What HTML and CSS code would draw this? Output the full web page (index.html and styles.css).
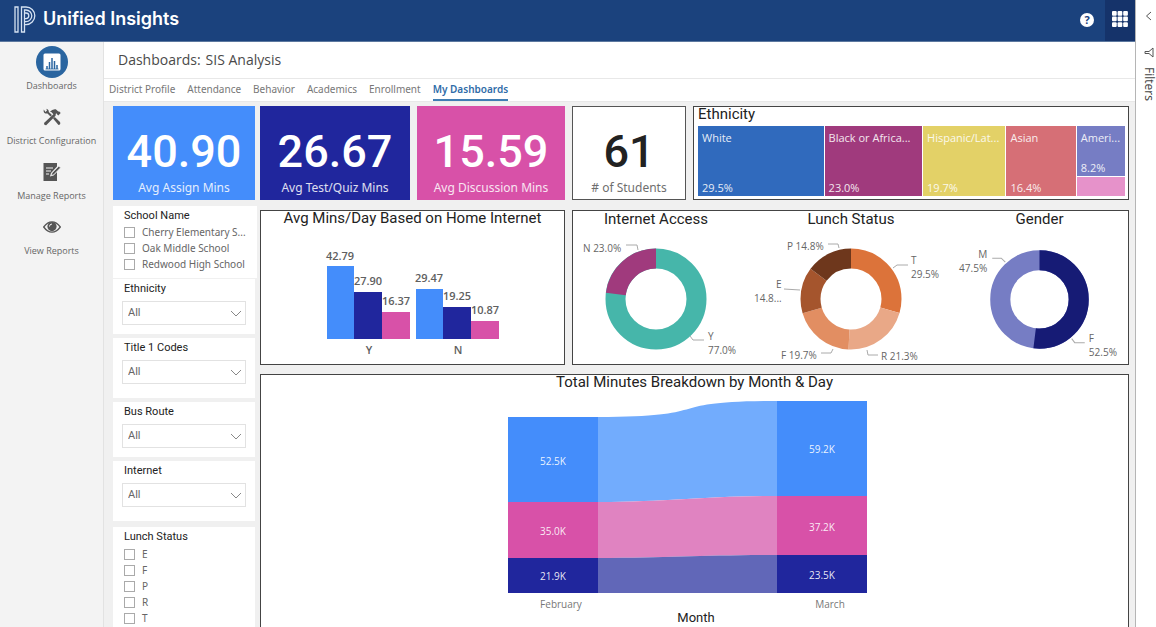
FILE: index.html
```html
<!DOCTYPE html>
<html lang="en">
<head>
<meta charset="utf-8">
<title>Unified Insights</title>
<link rel="stylesheet" href="styles.css">
</head>
<body>
<div class="app">
  <header class="topbar">
    <a class="brand" href="#">
      <svg class="brand-logo" width="22" height="27" viewBox="0 0 22 27" fill="none" stroke="#d5e2f2" stroke-width="1.300">
        <path d="M1 1V26H4V1ZM7.500 26V1H12A8.800 8.800 0 0 1 12 18.600H10.500V26Z"/>
        <path d="M10.500 18V4H12A5.800 5.800 0 0 1 12 15.600H10.500M10.500 7H12A2.800 2.800 0 0 1 12 12.600H10.500"/>
      </svg>
      <span>Unified Insights</span>
    </a>
    <button class="help" aria-label="Help">?</button>
    <button class="apps" aria-label="Apps">
      <svg width="16" height="16" viewBox="0 0 16 16" fill="#fff"><rect width="4.700" height="4.700" rx="1"/><rect x="5.600" width="4.700" height="4.700" rx="1"/><rect x="11.200" width="4.700" height="4.700" rx="1"/><rect y="5.600" width="4.700" height="4.700" rx="1"/><rect x="5.600" y="5.600" width="4.700" height="4.700" rx="1"/><rect x="11.200" y="5.600" width="4.700" height="4.700" rx="1"/><rect y="11.200" width="4.700" height="4.700" rx="1"/><rect x="5.600" y="11.200" width="4.700" height="4.700" rx="1"/><rect x="11.200" y="11.200" width="4.700" height="4.700" rx="1"/></svg>
    </button>
  </header>
  <div class="shell">
    <nav class="sidebar">
      <a class="side-item" href="#">
        <span class="side-icon active"><svg width="18" height="18" viewBox="0 0 18 18"><rect x="0.500" y="0.500" width="17" height="17" rx="1.500" fill="#fff"/><path d="M4 16V13M6.500 16V9M9 16V5M11.500 16V8M14 16V12" stroke="#2a65a0" stroke-width="1.500"/><path d="M2.500 16H15.500" stroke="#2a65a0" stroke-width=".8"/></svg></span>
        <span>Dashboards</span>
      </a>
      <a class="side-item" href="#">
        <span class="side-icon"><svg width="18" height="18" viewBox="0 0 18 18" fill="#555"><path d="M.8 1.500Q0 4.500 2.500 5.500L4.500 5.500 7.500 8.500 9 7 5.800 4Q6 1.500 3.300.8L4 2.500 2.500 4Z"/><path d="M10 10.500L11.800 9 17 14Q18 16.500 15.500 17Z"/><path d="M1 15L10.400 6.200 8.600 4.300 7 3.800Q9.300 .8 12.800 1.300L15.300 3.600 16.300 3.500 17.700 5 15.300 7.500 14 6.300V5.500L12.800 5.800 12.600 7.800 3.200 17.300Q.8 17.500 1 15Z"/></svg></span>
        <span>District Configuration</span>
      </a>
      <a class="side-item" href="#">
        <span class="side-icon"><svg width="18" height="18" viewBox="0 0 18 18"><path d="M.5 0H14V3.500L8 10 7 13.500 10.500 12.500 14 9V18H.5Z" fill="#555"/><path d="M3 5H10M3 8H8M3 11H6" stroke="#f3f3f3" stroke-width="1.200"/><path d="M8.300 12.500L9 10 15.800 3.200 17.500 4.800 10.700 11.700Z" fill="#555" stroke="#f3f3f3" stroke-width=".6"/></svg></span>
        <span>Manage Reports</span>
      </a>
      <a class="side-item" href="#">
        <span class="side-icon"><svg width="18" height="12" viewBox="0 0 18 12"><path d="M.7 6Q4.500 .8 9 .8T17.300 6Q13.500 11.200 9 11.200T.7 6Z" fill="none" stroke="#555" stroke-width="1.300"/><circle cx="9" cy="5.600" r="4.600" fill="#555"/><path d="M6.500 5.500A2.500 2.500 0 0 1 9 3" fill="none" stroke="#f3f3f3"/></svg></span>
        <span>View Reports</span>
      </a>
    </nav>
    <main class="main">
      <h1 class="page-title"><span>Dashboards:</span><span>SIS Analysis</span></h1>
      <nav class="tabs">
        <a href="#">District Profile</a><a href="#">Attendance</a><a href="#">Behavior</a><a href="#">Academics</a><a href="#">Enrollment</a><a class="current" href="#">My Dashboards</a>
      </nav>
      <div class="canvas">
        <div class="left">
          <section class="kpi blue"><strong>40.90</strong><span>Avg Assign Mins</span></section>
          <fieldset class="slicer list first">
            <legend>School Name</legend>
            <label><input type="checkbox"><span>Cherry Elementary S...</span></label>
            <label><input type="checkbox"><span>Oak Middle School</span></label>
            <label><input type="checkbox"><span>Redwood High School</span></label>
          </fieldset>
          <div class="slicer short">
            <label for="s-eth">Ethnicity</label>
            <div class="drop"><select id="s-eth"><option>All</option></select><svg width="12" height="7" viewBox="0 0 12 7"><path d="M1 1L6 6 11 1"/></svg></div>
          </div>
          <div class="slicer tall">
            <label for="s-title">Title 1 Codes</label>
            <div class="drop"><select id="s-title"><option>All</option></select><svg width="12" height="7" viewBox="0 0 12 7"><path d="M1 1L6 6 11 1"/></svg></div>
          </div>
          <div class="slicer short">
            <label for="s-bus">Bus Route</label>
            <div class="drop"><select id="s-bus"><option>All</option></select><svg width="12" height="7" viewBox="0 0 12 7"><path d="M1 1L6 6 11 1"/></svg></div>
          </div>
          <div class="slicer tall">
            <label for="s-net">Internet</label>
            <div class="drop"><select id="s-net"><option>All</option></select><svg width="12" height="7" viewBox="0 0 12 7"><path d="M1 1L6 6 11 1"/></svg></div>
          </div>
          <fieldset class="slicer list last">
            <legend>Lunch Status</legend>
            <label><input type="checkbox"><span>E</span></label>
            <label><input type="checkbox"><span>F</span></label>
            <label><input type="checkbox"><span>P</span></label>
            <label><input type="checkbox"><span>R</span></label>
            <label><input type="checkbox"><span>T</span></label>
          </fieldset>
        </div>
        <div class="right">
          <div class="row-kpi">
            <section class="kpi navy"><strong>26.67</strong><span>Avg Test/Quiz Mins</span></section>
            <section class="kpi pink"><strong>15.59</strong><span>Avg Discussion Mins</span></section>
            <section class="kpi plain"><strong>61</strong><span># of Students</span></section>
            <section class="panel ethnicity">
              <h2>Ethnicity</h2>
              <div class="treemap">
                <div class="tile t-white"><span>White</span><span>29.5%</span></div>
                <div class="tile t-black"><span>Black or Africa...</span><span>23.0%</span></div>
                <div class="tile t-hisp"><span>Hispanic/Lat...</span><span>19.7%</span></div>
                <div class="tile t-asian"><span>Asian</span><span>16.4%</span></div>
                <div class="tile-stack">
                  <div class="tile t-amer"><span>Ameri...</span><span>8.2%</span></div>
                  <div class="tile t-other"></div>
                </div>
              </div>
            </section>
          </div>
          <div class="row-charts">
            <section class="panel bars">
              <h2>Avg Mins/Day Based on Home Internet</h2>
              <svg class="chart" viewBox="0 0 303 136">
                <g fill="#448dfb"><rect x="66" y="40" width="27" height="73"/><rect x="155" y="63" width="27" height="50"/></g>
                <g fill="#20269d"><rect x="93" y="66" width="28" height="47"/><rect x="182" y="81" width="28" height="32"/></g>
                <g fill="#d851a8"><rect x="121" y="86" width="28" height="27"/><rect x="210" y="95" width="28" height="18"/></g>
                <g class="bar-label"><text x="79" y="34">42.79</text><text x="107" y="59">27.90</text><text x="135" y="79">16.37</text><text x="168" y="56">29.47</text><text x="196" y="74">19.25</text><text x="224" y="88">10.87</text><text x="108" y="128">Y</text><text x="197" y="128">N</text></g>
              </svg>
            </section>
            <section class="panel donuts">
              <figure class="f-net">
                <h2>Internet Access</h2>
                <svg class="chart" viewBox="0 0 166 136">
                  <g class="ring" transform="rotate(-90 83 72)"><circle cx="83" cy="72" r="40.500" pathLength="100" stroke="#46b6aa"/><circle cx="83" cy="72" r="40.500" pathLength="100" stroke="#a03a7d" stroke-dasharray="23 77" stroke-dashoffset="-77"/></g>
                  <path class="lead" d="M53 18H64L65 23M117 109L120 113H131"/>
                  <g class="lab"><text x="10" y="25">N 23.0%</text><text x="135" y="113">Y</text><text x="135" y="127">77.0%</text></g>
                </svg>
              </figure>
              <figure>
                <h2>Lunch Status</h2>
                <svg class="chart" viewBox="0 0 200 136">
                  <g class="ring" transform="rotate(-90 100 72)"><circle cx="100" cy="72" r="40.500" pathLength="100" stroke="#dc733a" stroke-dasharray="29.500 70.500"/><circle cx="100" cy="72" r="40.500" pathLength="100" stroke="#e9a887" stroke-dasharray="21.300 78.700" stroke-dashoffset="-29.500"/><circle cx="100" cy="72" r="40.500" pathLength="100" stroke="#e28e62" stroke-dasharray="19.600 80.400" stroke-dashoffset="-50.800"/><circle cx="100" cy="72" r="40.500" pathLength="100" stroke="#a5552d" stroke-dasharray="14.800 85.200" stroke-dashoffset="-70.400"/><circle cx="100" cy="72" r="40.500" pathLength="100" stroke="#6e371c" stroke-dasharray="14.800 85.200" stroke-dashoffset="-85.200"/></g>
                  <path class="lead" d="M77 17H87L88 21M33 62L49 63M70 126H80L82 122M116 123L117 128H127M142 41L146 38H157"/>
                  <g class="lab"><text x="36" y="23">P 14.8%</text><text x="25" y="61">E</text><text x="3" y="75">14.8...</text><text x="30" y="132">F 19.7%</text><text x="130" y="133">R 21.3%</text><text x="160" y="37">T</text><text x="160" y="51">29.5%</text></g>
                </svg>
              </figure>
              <figure>
                <h2>Gender</h2>
                <svg class="chart" viewBox="0 0 176 136">
                  <g class="ring" transform="rotate(-90 88 72)"><circle cx="88" cy="72" r="39" pathLength="100" stroke="#767dc4"/><circle cx="88" cy="72" r="39" pathLength="100" stroke="#161b75" stroke-dasharray="52 48"/></g>
                  <path class="lead" d="M41 31H50L54 35M120 111L123 115H133"/>
                  <g class="lab"><text x="27" y="31">M</text><text x="8" y="45">47.5%</text><text x="137" y="114">F</text><text x="137" y="128">52.5%</text></g>
                </svg>
              </figure>
            </section>
          </div>
          <section class="panel ribbon">
            <h2>Total Minutes Breakdown by Month &amp; Day</h2>
            <svg class="chart" viewBox="0 0 867 237">
              <path fill="#72acfd" d="M337 27C460 27 395 11 516 11V106C440 106 410 112 337 112Z"/>
              <path fill="#e083c1" d="M337 112C410 112 440 106 516 106V165C440 165 410 168 337 168Z"/>
              <path fill="#6167b8" d="M337 168C410 168 440 165 516 165V203H337Z"/>
              <g fill="#448dfb"><rect x="247" y="27" width="90" height="85"/><rect x="516" y="11" width="90" height="95"/></g>
              <g fill="#d851a8"><rect x="247" y="112" width="90" height="56"/><rect x="516" y="106" width="90" height="59"/></g>
              <g fill="#20269d"><rect x="247" y="168" width="90" height="35"/><rect x="516" y="165" width="90" height="38"/></g>
              <g class="val"><text x="292" y="75">52.5K</text><text x="292" y="145">35.0K</text><text x="292" y="190">21.9K</text><text x="561" y="63">59.2K</text><text x="561" y="141">37.2K</text><text x="561" y="189">23.5K</text></g>
              <g class="axis"><text x="300" y="218">February</text><text x="569" y="218">March</text></g>
              <text class="axis-title" x="435" y="232">Month</text>
            </svg>
          </section>
        </div>
      </div>
    </main>
  </div>
</div>
<aside class="rail">
  <button aria-label="Expand filters"><svg width="8" height="10" viewBox="0 0 8 10"><path d="M6 1L1.500 5 6 9"/></svg></button>
  <svg class="funnel" width="10" height="11" viewBox="0 0 10 11"><path d="M9 1V10L5 6.500H1V4.500H5Z"/></svg>
  <span>Filters</span>
</aside>
</body>
</html>
```

FILE: styles.css
```css
* { box-sizing: border-box; }
body {
  margin: 0;
  display: flex;
  height: 100vh;
  overflow: hidden;
  font-family: "Open Sans", "Noto Sans", sans-serif;
  color: #666;
  background: #fff;
}
a { color: inherit; text-decoration: none; }
button { border: 0; padding: 0; background: none; }
h1, h2, figure, fieldset { margin: 0; }
svg { display: block; }

.app { flex: 1; min-width: 0; display: flex; flex-direction: column; }

.topbar {
  display: flex;
  align-items: center;
  height: 42px;
  flex: none;
  padding-left: 14px;
  background: #1b427d;
  border-bottom: 1px solid #5c789f;
}
.brand {
  display: flex;
  align-items: center;
  gap: 7px;
  margin-right: auto;
  padding-bottom: 3px;
  color: #fff;
  font: 600 18px/24px Inter, sans-serif;
}
.help {
  width: 14px;
  height: 14px;
  margin: 0 11px 2px 0;
  border-radius: 50%;
  background: #fff;
  color: #1b427d;
  font: 700 11px/14px "Open Sans", sans-serif;
}
.apps {
  display: grid;
  place-items: center;
  width: 30px;
  height: 41px;
  padding-bottom: 3px;
  background: #15336a;
}

.shell { flex: 1; min-height: 0; display: flex; }
.sidebar {
  width: 104px;
  flex: none;
  display: flex;
  flex-direction: column;
  gap: 8px;
  padding-top: 4px;
  background: #f3f3f3;
  border-right: 1px solid #e2e2e2;
}
.side-item {
  display: flex;
  flex-direction: column;
  align-items: center;
  font-size: 9px;
  line-height: 15px;
  white-space: nowrap;
}
.side-icon {
  display: grid;
  place-items: center;
  width: 32px;
  height: 32px;
  border-radius: 50%;
}
.side-icon.active { background: #2a65a0; }

.main { flex: 1; min-width: 0; display: flex; flex-direction: column; }
.page-title {
  display: flex;
  gap: 5px;
  padding-left: 14px;
  font-weight: 500;
  font-size: 14px;
  line-height: 36px;
  color: #4a4a4a;
}
.tabs {
  display: flex;
  gap: 12px;
  padding-left: 5px;
  border-top: 1px solid #e8e8e8;
  font-family: "Noto Sans", sans-serif;
  font-size: 10px;
  line-height: 20px;
  color: #777;
}
.tabs a { border-bottom: 2px solid transparent; }
.tabs .current { color: #2f6ca8; font-weight: 600; border-color: #3f7db3; }

.canvas {
  flex: 1;
  min-height: 0;
  display: flex;
  gap: 5px;
  padding: 4px 6px 0 9px;
  background: #f0f0f0;
  border-top: 1px solid #e8e8e8;
  overflow: hidden;
}
.left { width: 142px; flex: none; display: flex; flex-direction: column; gap: 4px; }
.right { flex: 1; min-width: 0; display: flex; flex-direction: column; gap: 9px; }

.kpi {
  display: flex;
  flex-direction: column;
  align-items: center;
  height: 94px;
  flex: none;
  padding-top: 19px;
  color: #fff;
}
.kpi strong { font: 500 45px/54px Roboto, sans-serif; }
.kpi span {
  font-family: "Noto Sans", sans-serif;
  font-size: 12px;
  line-height: 18px;
  opacity: .85;
  white-space: nowrap;
}
.blue { background: #448dfb; }
.navy { background: #20269d; }
.pink { background: #d851a8; }
.plain { background: #fff; color: #222; border: 1px solid #555; padding-top: 18px; }
.plain span { color: #555; }

.slicer {
  background: #fff;
  border: 0;
  padding: 2px 9px 0;
  font-size: 10px;
}
.slicer > label, .slicer legend {
  display: block;
  float: left;
  width: 100%;
  padding: 0 2px;
  color: #222;
  font: 400 11px/15px Roboto, sans-serif;
}
.short { height: 55px; flex: none; }
.tall { height: 60px; flex: none; }
.first { height: 72px; margin: 2px 0 -3px; }
.first legend { margin-bottom: 1px; }
.last { flex: 1; margin-top: 2px; }
.last legend { margin-bottom: 2px; }
.slicer.list > label {
  display: flex;
  align-items: center;
  gap: 7px;
  color: #666;
  font: 400 10px/16px "Noto Sans", sans-serif;
  white-space: nowrap;
}
.list input {
  appearance: none;
  width: 11px;
  height: 11px;
  flex: none;
  margin: 0;
  border: 1px solid #aaa;
  background: #fff;
}
.drop { display: grid; align-items: center; clear: both; padding-top: 5px; }
.drop > * { grid-area: 1 / 1; }
.drop select {
  appearance: none;
  width: 100%;
  height: 24px;
  padding: 0 5px;
  border: 1px solid #e2e2e2;
  border-radius: 0;
  background: #fff;
  color: #666;
  font: 400 11px/22px Roboto, sans-serif;
}
.drop svg {
  justify-self: end;
  margin-right: 4px;
  fill: none;
  stroke: #888;
  pointer-events: none;
}

.panel { background: #fff; border: 1px solid #444; overflow: hidden; }
.panel h2 {
  color: #222;
  font: 400 15px/16px Roboto, sans-serif;
  text-align: center;
  white-space: nowrap;
}
.chart { width: 100%; height: auto; font-size: 10px; }

.row-kpi {
  display: grid;
  grid-template-columns: 150fr 148fr 114fr 436fr;
  gap: 7px;
  margin-bottom: 1px;
}
.panel.ethnicity { display: flex; flex-direction: column; padding: 0 3px 3px 4px; }
.ethnicity h2 { text-align: left; line-height: 15px; margin-bottom: 4px; }
.treemap {
  flex: 1;
  min-height: 0;
  display: grid;
  grid-template-columns: 125fr 97fr 82fr 69fr 48fr;
  gap: 1px;
}
.tile {
  display: flex;
  flex-direction: column;
  justify-content: space-between;
  min-width: 0;
  min-height: 0;
  padding: 4px 0 0 4px;
  color: #fff;
  font-size: 11px;
  line-height: 16px;
  white-space: nowrap;
  overflow: hidden;
}
.tile span { opacity: .88; }
.tile-stack { display: grid; grid-template-rows: 51fr 19fr; gap: 1px; min-width: 0; min-height: 0; }
.t-white { background: #306abd; }
.t-black { background: #a03a7d; }
.t-hisp { background: #e3d167; }
.t-asian { background: #d66f76; }
.t-amer { background: #767dc4; }
.t-other { background: #e692ca; padding: 0; }

.row-charts { display: grid; grid-template-columns: 305fr 557fr; gap: 7px; }
.row-charts .panel { height: 155px; }
.bars h2, .ribbon h2 { line-height: 14px; margin-bottom: 1px; }
.bars .bar-label { font-size: 11px; font-weight: 600; fill: #606060; text-anchor: middle; }
.donuts { display: grid; grid-template-columns: 178fr 200fr 177fr; }
.f-net { padding-right: 12px; }
.ring { fill: none; stroke-width: 20; }
.lead { fill: none; stroke: #aaa; }
.lab { fill: #666; }

.ribbon { flex: 1; min-height: 0; border-bottom: 0; }
.val { fill: #fff; fill-opacity: .9; text-anchor: middle; }
.axis { fill: #777; text-anchor: middle; }
.axis-title { fill: #222; font: 400 13px Roboto, sans-serif; text-anchor: middle; }

.rail {
  width: 21px;
  flex: none;
  display: flex;
  flex-direction: column;
  align-items: center;
  padding: 11px 0 0 5px;
  border-left: 1px solid #b5b5b5;
  color: #444;
}
.rail path { fill: none; stroke: #555; }
.funnel { margin: 26px 0 9px; }
.rail span { writing-mode: vertical-rl; font-size: 12px; line-height: 14px; }
```
